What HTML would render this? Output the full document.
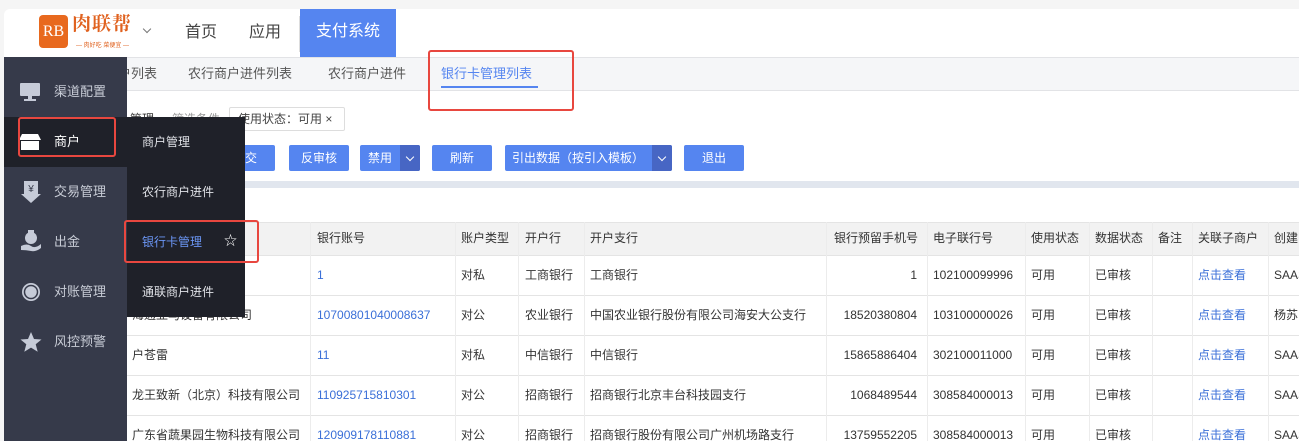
<!DOCTYPE html>
<html><head><meta charset="utf-8"><style>
*{margin:0;padding:0;box-sizing:border-box}
html,body{width:1299px;height:441px;overflow:hidden}
body{background:#f5f5f5;font-family:"Liberation Sans","Noto Sans CJK SC",sans-serif;font-size:12px;color:#333;position:relative}
.a{position:absolute;white-space:nowrap}
.btn{position:absolute;top:145px;height:26px;background:#5585f0;color:#fff;font-size:12px;line-height:26px;text-align:center;border-radius:2px}
.dd{position:absolute;top:0;right:0;width:20px;height:26px;background:#4766c4;border-radius:0 2px 2px 0}
.dd:after{content:"";position:absolute;left:7px;top:9px;width:5px;height:5px;border-right:1.5px solid #fff;border-bottom:1.5px solid #fff;transform:rotate(45deg)}
.row{position:absolute;left:127px;width:1172px;height:40px;border-bottom:1px solid #e4e4e4;background:#fff;overflow:hidden}
.row span{position:absolute;top:0;line-height:38px;white-space:nowrap}
.hd{position:absolute;top:222px;line-height:33px;white-space:nowrap}
.blue{color:#3a6fd8}
.side span{position:absolute;left:50px;color:#c8ccd6;font-size:13px;line-height:16px}
.sub span{position:absolute;left:142px;color:#dfe1e6;font-size:12px;line-height:16px}
.red{position:absolute;border:2px solid #e8473f;border-radius:3px}
.vl{position:absolute;top:222px;width:1px;height:219px;background:#ececec}
</style></head><body>
<div class="a" style="left:4px;top:9px;width:1295px;height:48px;background:#fff;border-radius:6px 0 0 0"></div>
<div class="a" style="left:39px;top:15px;width:29px;height:33px;background:#e8691e;border-radius:4px;color:#fff;font-family:'Liberation Serif',serif;font-size:16px;line-height:33px;text-align:center">RB</div>
<div class="a" style="left:72px;top:13px;color:#e0621f;font-size:19px;line-height:24px;font-family:'Liberation Serif','Noto Serif CJK SC',serif;font-weight:bold;letter-spacing:1px">肉联帮</div>
<div class="a" style="left:76px;top:40px;color:#e0621f;font-size:6px">— 肉好吃 菜便宜 —</div>
<div class="a" style="left:144px;top:26px;width:6px;height:6px;border-right:1px solid #777;border-bottom:1px solid #777;transform:rotate(45deg)"></div>
<div class="a" style="left:185px;top:22px;font-size:16px;line-height:22px;color:#444">首页</div>
<div class="a" style="left:249px;top:22px;font-size:16px;line-height:22px;color:#444">应用</div>
<div class="a" style="left:299px;top:16px;width:1px;height:36px;background:#ddd"></div>
<div class="a" style="left:300px;top:9px;width:96px;height:48px;background:#5585f0;color:#fff;font-size:16px;line-height:46px;text-align:center">支付系统</div>
<div class="a" style="left:4px;top:57px;width:1295px;height:34px;background:#f5f6f8;border-top:1px solid #e2e3e6;border-bottom:1px solid #e2e3e6"></div>
<div class="a" style="left:118px;top:65px;font-size:13px;line-height:18px;color:#555">户列表</div>
<div class="a" style="left:188px;top:65px;font-size:13px;line-height:18px;color:#555">农行商户进件列表</div>
<div class="a" style="left:328px;top:65px;font-size:13px;line-height:18px;color:#555">农行商户进件</div>
<div class="a" style="left:441px;top:65px;font-size:13px;line-height:18px;color:#5585f0">银行卡管理列表</div>
<div class="a" style="left:441px;top:86px;width:97px;height:2px;background:#5585f0"></div>
<div class="a" style="left:4px;top:91px;width:1295px;height:350px;background:#fff"></div>
<div class="red" style="left:428px;top:50px;width:146px;height:61px"></div>
<div class="a" style="left:130px;top:111px;font-size:12px;line-height:16px;color:#333">管理</div>
<div class="a" style="left:172px;top:111px;font-size:12px;line-height:16px;color:#999">筛选条件</div>
<div class="a" style="left:229px;top:107px;width:116px;height:24px;border:1px solid #ddd;border-radius:2px;font-size:12px;line-height:22px;padding-left:8px;color:#444">使用状态：可用 ×</div>
<div class="btn" style="left:215px;width:60px">提交</div>
<div class="btn" style="left:289px;width:60px">反审核</div>
<div class="btn" style="left:360px;width:60px;text-align:left;padding-left:8px">禁用<div class="dd"></div></div>
<div class="btn" style="left:432px;width:60px">刷新</div>
<div class="btn" style="left:505px;width:167px;text-align:left;padding-left:7px">引出数据（按引入模板）<div class="dd"></div></div>
<div class="btn" style="left:684px;width:60px">退出</div>
<div class="a" style="left:4px;top:181px;width:1295px;height:7px;background:#e1e6ee"></div>
<div class="a" style="left:127px;top:222px;width:1172px;height:34px;background:#f2f2f2;border-top:1px solid #e4e4e4;border-bottom:1px solid #e4e4e4"></div>
<div class="hd" style="left:317px">银行账号</div>
<div class="hd" style="left:461px">账户类型</div>
<div class="hd" style="left:525px">开户行</div>
<div class="hd" style="left:590px">开户支行</div>
<div class="hd" style="left:834px">银行预留手机号</div>
<div class="hd" style="left:933px">电子联行号</div>
<div class="hd" style="left:1031px">使用状态</div>
<div class="hd" style="left:1095px">数据状态</div>
<div class="hd" style="left:1158px">备注</div>
<div class="hd" style="left:1198px">关联子商户</div>
<div class="hd" style="left:1274px">创建</div>
<div class="row" style="top:256px"><span class="blue" style="left:190px">1</span><span style="left:334px">对私</span><span style="left:398px">工商银行</span><span style="left:463px">工商银行</span><span style="right:382px">1</span><span style="left:806px">102100099996</span><span style="left:904px">可用</span><span style="left:968px">已审核</span><span class="blue" style="left:1071px">点击查看</span><span style="left:1147px">SAAS</span></div>
<div class="row" style="top:296px"><span style="left:5px">海通亚马设备有限公司</span><span class="blue" style="left:190px">10700801040008637</span><span style="left:334px">对公</span><span style="left:398px">农业银行</span><span style="left:463px">中国农业银行股份有限公司海安大公支行</span><span style="right:382px">18520380804</span><span style="left:806px">103100000026</span><span style="left:904px">可用</span><span style="left:968px">已审核</span><span class="blue" style="left:1071px">点击查看</span><span style="left:1147px">杨苏</span></div>
<div class="row" style="top:336px"><span style="left:5px">户苍雷</span><span class="blue" style="left:190px">11</span><span style="left:334px">对私</span><span style="left:398px">中信银行</span><span style="left:463px">中信银行</span><span style="right:382px">15865886404</span><span style="left:806px">302100011000</span><span style="left:904px">可用</span><span style="left:968px">已审核</span><span class="blue" style="left:1071px">点击查看</span><span style="left:1147px">SAAS</span></div>
<div class="row" style="top:376px"><span style="left:5px">龙王致新（北京）科技有限公司</span><span class="blue" style="left:190px">110925715810301</span><span style="left:334px">对公</span><span style="left:398px">招商银行</span><span style="left:463px">招商银行北京丰台科技园支行</span><span style="right:382px">1068489544</span><span style="left:806px">308584000013</span><span style="left:904px">可用</span><span style="left:968px">已审核</span><span class="blue" style="left:1071px">点击查看</span><span style="left:1147px">SAAS</span></div>
<div class="row" style="top:416px;height:25px;border-bottom:0"><span style="left:5px">广东省蔬果园生物科技有限公司</span><span class="blue" style="left:190px">120909178110881</span><span style="left:334px">对公</span><span style="left:398px">招商银行</span><span style="left:463px">招商银行股份有限公司广州机场路支行</span><span style="right:382px">13759552205</span><span style="left:806px">308584000013</span><span style="left:904px">可用</span><span style="left:968px">已审核</span><span class="blue" style="left:1071px">点击查看</span><span style="left:1147px">SAAS</span></div>
<div class="vl" style="left:310px"></div><div class="vl" style="left:455px"></div><div class="vl" style="left:518px"></div><div class="vl" style="left:584px"></div><div class="vl" style="left:826px"></div><div class="vl" style="left:927px"></div><div class="vl" style="left:1025px"></div><div class="vl" style="left:1089px"></div><div class="vl" style="left:1152px"></div><div class="vl" style="left:1192px"></div><div class="vl" style="left:1268px"></div>
<div class="a side" style="left:4px;top:57px;width:123px;height:384px;background:#363a4a">
 <div class="a" style="left:0;top:60px;width:123px;height:50px;background:#1f2129"></div>
 <svg class="a" style="left:15px;top:25px" width="22" height="20"><rect x="1" y="1" width="20" height="13" rx="1" fill="#c6cbd8"/><rect x="9" y="14" width="4" height="3" fill="#c6cbd8"/><rect x="5" y="17" width="12" height="2" fill="#c6cbd8"/></svg>
 <span style="top:27px">渠道配置</span>
 <svg class="a" style="left:15px;top:76px" width="22" height="18"><path d="M3 1h16l3 6H0z" fill="#fff"/><rect x="2" y="8" width="18" height="9" fill="#fff"/></svg>
 <span style="top:77px;color:#fff">商户</span>
 <svg class="a" style="left:17px;top:124px" width="20" height="22"><path d="M3 0h14v13h3l-10 9-10-9h3z" fill="#c6cbd8"/><text x="10" y="11" font-size="10" fill="#363a4a" text-anchor="middle" font-family="Liberation Sans">¥</text></svg>
 <span style="top:127px">交易管理</span>
 <svg class="a" style="left:16px;top:173px" width="22" height="22"><circle cx="11" cy="8" r="6" fill="#c6cbd8"/><rect x="8" y="0" width="6" height="3" fill="#c6cbd8"/><path d="M1 16q6-3 10 0t10-2v4q-5 4-10 3t-10-1z" fill="#c6cbd8"/></svg>
 <span style="top:177px">出金</span>
 <svg class="a" style="left:16px;top:224px" width="22" height="22"><circle cx="11" cy="11" r="9" fill="#c6cbd8"/><circle cx="11" cy="11" r="6.5" fill="none" stroke="#363a4a" stroke-width="1.5"/></svg>
 <span style="top:227px">对账管理</span>
 <svg class="a" style="left:16px;top:274px" width="22" height="22"><path d="M11 1l3 7 7.5.5-5.8 4.8 2 7.4L11 16.6 4.3 20.7l2-7.4L.5 8.5 8 8z" fill="#c6cbd8"/></svg>
 <span style="top:277px">风控预警</span>
</div>
<div class="red" style="left:18px;top:117px;width:98px;height:40px"></div>
<div class="a" style="left:127px;top:117px;width:118px;height:200px;background:#1f2129"></div>
<div class="sub"><span style="top:134px">商户管理</span><span style="top:184px">农行商户进件</span><span style="top:234px;color:#6b96f5">银行卡管理</span><span style="top:284px">通联商户进件</span></div>
<div class="a" style="left:224px;top:233px;color:#fff;font-size:13px;line-height:16px">☆</div>
<div class="red" style="left:124px;top:220px;width:135px;height:43px"></div>
</body></html>
